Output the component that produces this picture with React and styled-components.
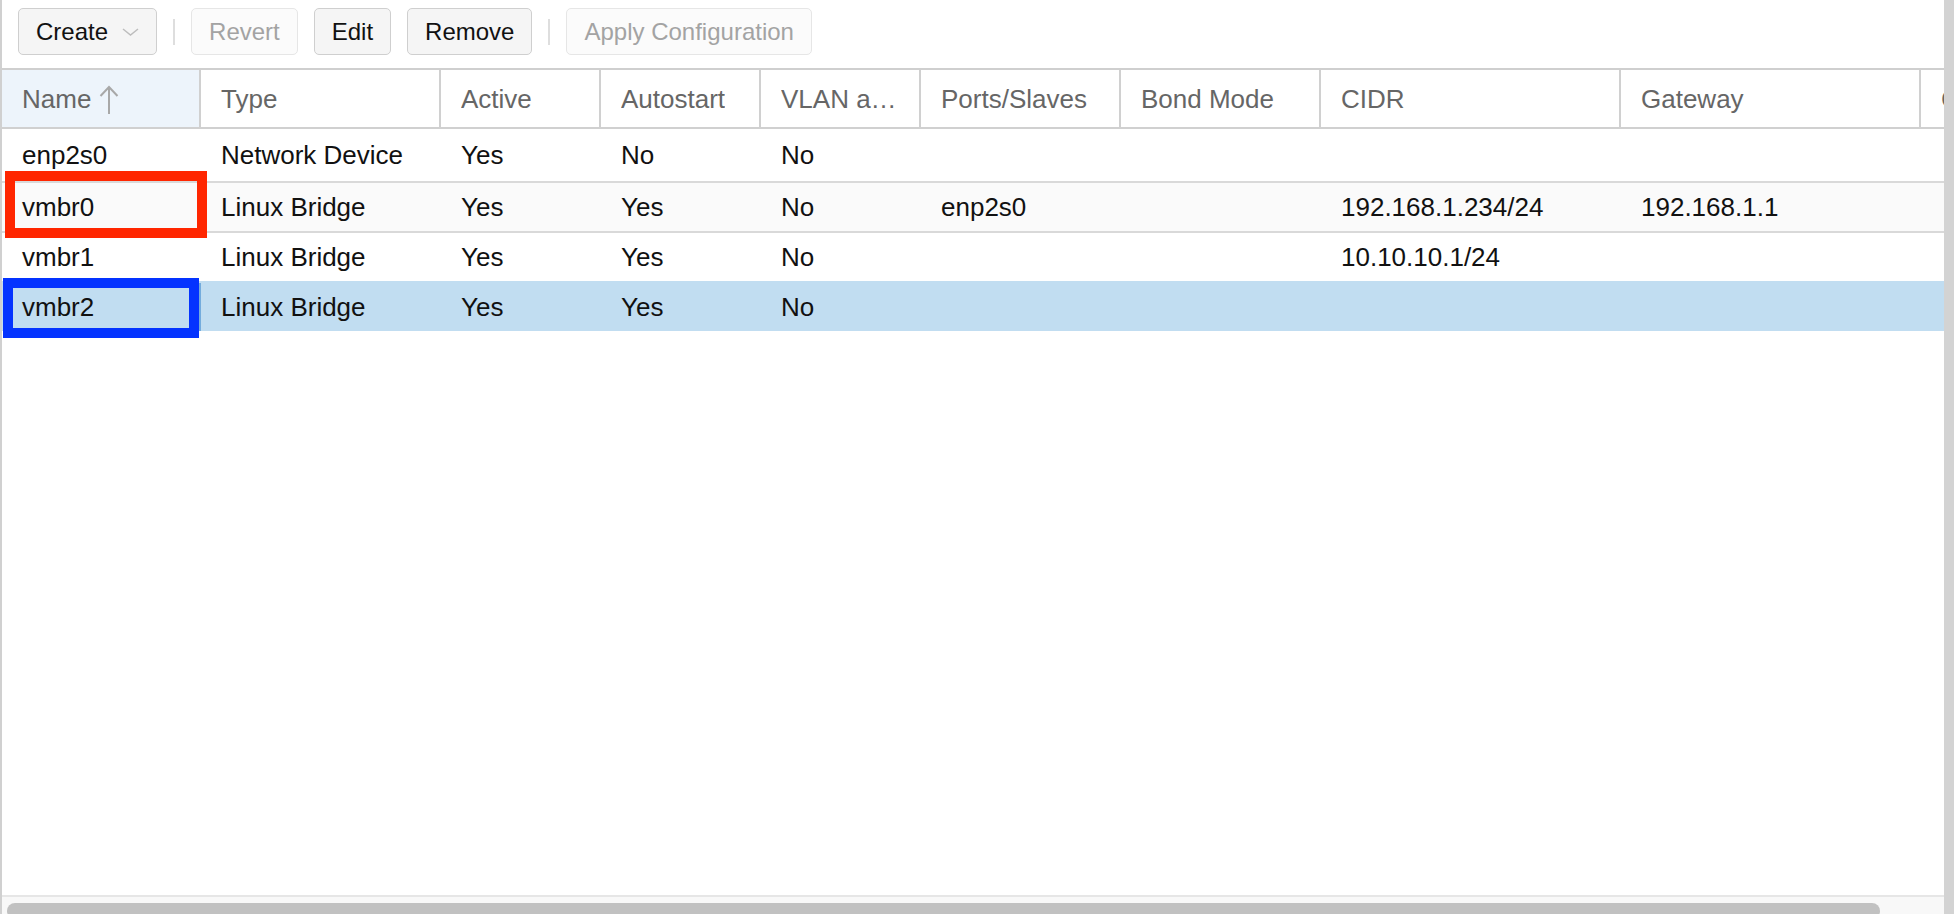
import React from "react";
import styled, { createGlobalStyle } from "styled-components";

const GlobalStyle = createGlobalStyle`
  html, body {
    margin: 0;
    height: 100%;
    background: #fff;
  }
  body {
    font-family: "Liberation Sans", Arial, sans-serif;
    overflow: hidden;
  }
  #root {
    height: 100%;
  }
`;

const Page = styled.div`
  position: relative;
  display: flex;
  height: 100vh;
  width: 100vw;
`;

const Panel = styled.div`
  flex: 1;
  min-width: 0;
  display: flex;
  flex-direction: column;
  border-left: 2px solid #d0d0d0;
`;

const RightEdge = styled.div`
  width: 10px;
  flex: none;
  background: #d3d3d3;
`;

const Toolbar = styled.div`
  height: 70px;
  box-sizing: border-box;
  flex: none;
  display: flex;
  align-items: flex-start;
  gap: 16px;
  padding: 8px 16px 0;
  border-bottom: 2px solid #cfcfcf;
`;

const Button = styled.div`
  height: 47px;
  box-sizing: border-box;
  display: inline-flex;
  align-items: center;
  padding: 0 17px;
  border: 1px solid ${p => (p.$disabled ? "#e6e6e6" : "#cfcfcf")};
  border-radius: 5px;
  background: ${p => (p.$disabled ? "#fbfbfb" : "#f5f5f5")};
  color: ${p => (p.$disabled ? "#a3a3a3" : "#111")};
  font-size: 24px;
  white-space: nowrap;
`;

const Chevron = styled.svg`
  margin-left: 14px;
  width: 17px;
  height: 8px;
`;

const Separator = styled.div`
  width: 2px;
  height: 26px;
  margin-top: 11px;
  background: #dedede;
`;

const Grid = styled.div`
  flex: 1;
  min-height: 0;
  display: flex;
  flex-direction: column;
  overflow: hidden;
`;

const HeaderRow = styled.div`
  flex: none;
  display: flex;
  height: 59px;
  box-sizing: border-box;
  border-bottom: 2px solid #d0d0d0;
`;

const HeaderCell = styled.div`
  flex: none;
  width: ${p => p.$w}px;
  box-sizing: border-box;
  display: flex;
  align-items: center;
  padding: 2px 20px 0;
  border-right: 2px solid #d0d0d0;
  background: ${p => (p.$sorted ? "#edf4fb" : "#fff")};
  color: #666;
  font-size: 26px;
  overflow: hidden;
`;

const Label = styled.span`
  white-space: nowrap;
  overflow: hidden;
  text-overflow: ellipsis;
`;

const SortArrow = styled.svg`
  flex: none;
  margin-left: 8px;
  width: 20px;
  height: 30px;
`;

const Body = styled.div`
  flex: 1;
  min-height: 0;
  overflow: hidden;
  background: #fff;
`;

const Row = styled.div`
  display: flex;
  height: ${p => (p.$first ? 52 : 50)}px;
  box-sizing: border-box;
  border-top: ${p => (p.$first ? 0 : 2)}px solid
    ${p => (p.$selected ? "#c1ddf1" : "#d9d9d9")};
  background: ${p => (p.$selected ? "#c1ddf1" : p.$alt ? "#fafafa" : "#fff")};
`;

const Cell = styled.div`
  flex: none;
  width: ${p => p.$w}px;
  box-sizing: border-box;
  display: flex;
  align-items: center;
  padding: 0 20px;
  color: #111;
  font-size: 26px;
  white-space: nowrap;
  overflow: hidden;
  box-shadow: ${p => (p.$focus ? "inset -2px 0 0 #74acdd" : "none")};
`;

const Scroller = styled.div`
  flex: none;
  height: 19px;
  box-sizing: border-box;
  border-top: 2px solid #e6e6e6;
  background: #f8f8f8;
  padding: 6px 64px 0 5px;
  overflow: hidden;
`;

const Thumb = styled.div`
  height: 16px;
  border-radius: 8px;
  background: #c1c1c1;
`;

const Annotation = styled.div`
  position: absolute;
  left: ${p => p.$x}px;
  top: ${p => p.$y}px;
  width: ${p => p.$w}px;
  height: ${p => p.$h}px;
  box-sizing: border-box;
  border: 10px solid ${p => p.$color};
  pointer-events: none;
`;

const columns = [
  { key: "name", title: "Name", w: 199, sorted: true },
  { key: "type", title: "Type", w: 240 },
  { key: "active", title: "Active", w: 160 },
  { key: "autostart", title: "Autostart", w: 160 },
  { key: "vlan", title: "VLAN aware", w: 160 },
  { key: "ports", title: "Ports/Slaves", w: 200 },
  { key: "bond", title: "Bond Mode", w: 200 },
  { key: "cidr", title: "CIDR", w: 300 },
  { key: "gateway", title: "Gateway", w: 300 },
  { key: "comment", title: "Comment", w: 200 },
];

const rows = [
  { name: "enp2s0", type: "Network Device", active: "Yes", autostart: "No", vlan: "No" },
  {
    name: "vmbr0",
    type: "Linux Bridge",
    active: "Yes",
    autostart: "Yes",
    vlan: "No",
    ports: "enp2s0",
    cidr: "192.168.1.234/24",
    gateway: "192.168.1.1",
  },
  { name: "vmbr1", type: "Linux Bridge", active: "Yes", autostart: "Yes", vlan: "No", cidr: "10.10.10.1/24" },
  { name: "vmbr2", type: "Linux Bridge", active: "Yes", autostart: "Yes", vlan: "No", selected: true },
];

export default function App() {
  return (
    <Page>
      <GlobalStyle />
      <Panel>
        <Toolbar>
          <Button>
            Create
            <Chevron viewBox="0 0 17 8">
              <polyline points="1,1 8.5,7 16,1" fill="none" stroke="#bdbdbd" strokeWidth="1.5" />
            </Chevron>
          </Button>
          <Separator />
          <Button $disabled>Revert</Button>
          <Button>Edit</Button>
          <Button>Remove</Button>
          <Separator />
          <Button $disabled>Apply Configuration</Button>
        </Toolbar>
        <Grid>
          <HeaderRow>
            {columns.map(c => (
              <HeaderCell key={c.key} $w={c.w} $sorted={c.sorted}>
                <Label>{c.title}</Label>
                {c.sorted && (
                  <SortArrow viewBox="0 0 20 30">
                    <line x1="10" y1="2" x2="10" y2="29" stroke="#a8a8a8" strokeWidth="2" />
                    <polyline points="1.5,11 10,2 18.5,11" fill="none" stroke="#a8a8a8" strokeWidth="2" />
                  </SortArrow>
                )}
              </HeaderCell>
            ))}
          </HeaderRow>
          <Body>
            {rows.map((r, i) => (
              <Row key={r.name} $first={i === 0} $alt={i % 2 === 1} $selected={r.selected}>
                {columns.map((c, j) => (
                  <Cell key={c.key} $w={c.w} $focus={r.selected && j === 0}>
                    {r[c.key] || ""}
                  </Cell>
                ))}
              </Row>
            ))}
          </Body>
          <Scroller>
            <Thumb />
          </Scroller>
        </Grid>
      </Panel>
      <RightEdge />
      <Annotation $x={5} $y={171} $w={202} $h={67} $color="#ff2600" />
      <Annotation $x={3} $y={278} $w={196} $h={60} $color="#0433ff" />
    </Page>
  );
}
